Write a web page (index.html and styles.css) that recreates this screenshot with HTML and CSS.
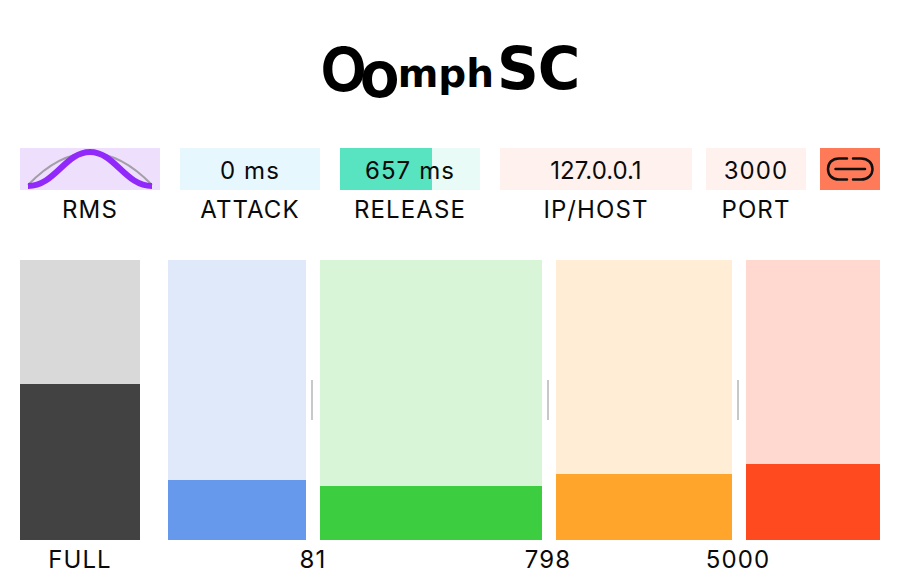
FILE: index.html
```html
<!DOCTYPE html>
<html lang="en">
<head>
  <meta charset="UTF-8">
  <title>OomphSC</title>
  <link rel="stylesheet" href="styles.css">
</head>
<body>
  <header class="logo">
    <span class="logo-big-o">O</span><span class="logo-small-o">o</span><span class="logo-mph">mph</span><span class="logo-sc">SC</span>
  </header>

  <section class="controls">
    <div class="control control-rms">
      <div class="box box-rms">
        <svg class="rms-curve" viewBox="0 0 140 42" width="140" height="42">
          <path class="curve-thin" d="M8 37 Q70 -27 132 37"/>
          <path class="curve-thick" d="M8 38 C35 38 45 4 70 4 C95 4 105 38 132 38"/>
        </svg>
      </div>
      <div class="label">RMS</div>
    </div>
    <div class="control control-attack">
      <div class="box box-attack">0 ms</div>
      <div class="label">ATTACK</div>
    </div>
    <div class="control control-release">
      <div class="box box-release">
        <div class="release-fill" style="width: 66%"></div>
        <span class="box-text">657 ms</span>
      </div>
      <div class="label">RELEASE</div>
    </div>
    <div class="control control-host">
      <div class="box box-net box-ip">127.0.0.1</div>
      <div class="label">IP/HOST</div>
    </div>
    <div class="control control-port">
      <div class="box box-net">3000</div>
      <div class="label">PORT</div>
    </div>
    <div class="control control-link">
      <button class="box box-link">
        <svg viewBox="0 0 60 42" width="60" height="42">
          <path class="link-icon" d="M27 10.500H19C12 10.500 8 15 8 21C8 27 12 31.500 19 31.500H27M33 10.500H41C48 10.500 52.500 15 52.500 21C52.500 27 48 31.500 41 31.500H33M15.500 21H45"/>
        </svg>
      </button>
    </div>
  </section>

  <section class="meters">
    <div class="full-col">
      <div class="bar bar-full"><div class="fill fill-full" style="height: 156px"></div></div>
      <div class="label">FULL</div>
    </div>
    <div class="bands">
      <div class="band-bars">
        <div class="bar bar-low"><div class="fill fill-low" style="height: 60px"></div></div>
        <div class="handle"></div>
        <div class="bar bar-mid"><div class="fill fill-mid" style="height: 54px"></div></div>
        <div class="handle"></div>
        <div class="bar bar-high"><div class="fill fill-high" style="height: 66px"></div></div>
        <div class="handle"></div>
        <div class="bar bar-top"><div class="fill fill-top" style="height: 76px"></div></div>
      </div>
      <div class="band-freqs">
        <span class="freq freq-low">81</span>
        <span class="freq freq-mid">798</span>
        <span class="freq freq-high">5000</span>
      </div>
    </div>
  </section>
</body>
</html>
```

FILE: styles.css
```css
/* Global */
*, *::before, *::after { box-sizing: border-box; }
html, body { height: 100%; }
body {
  margin: 0;
  padding: 0 20px;
  overflow: hidden;
  background: #fff;
  color: #0a0a0a;
  font-family: "Inter", "Liberation Sans", sans-serif;
  font-size: 24px;
  letter-spacing: 1.1px;
}

/* Logo */
.logo {
  display: flex;
  justify-content: center;
  align-items: flex-start;
  height: 148px;
  padding-top: 40px;
  color: #000;
  font-weight: 700;
  line-height: 1;
  letter-spacing: 0;
}
.logo-big-o { font-size: 60px; letter-spacing: -7px; margin-top: -1px; }
.logo-small-o { font-size: 65px; margin-top: 1px; letter-spacing: -2px; }
.logo-mph {
  font-family: "DejaVu Sans", sans-serif;
  font-size: 39px;
  margin-top: 14px;
}
.logo-sc {
  font-family: "DejaVu Sans", sans-serif;
  font-size: 58px;
  letter-spacing: -1px;
  margin-left: 3px;
}

/* Controls */
.controls { display: flex; height: 112px; }
.control { display: flex; flex-direction: column; align-items: stretch; }
.control-rms, .control-attack, .control-release { width: 140px; margin-right: 20px; }
.control-host { width: 192px; margin-right: 14px; }
.control-port { width: 100px; margin-right: 14px; }
.control-link { width: 60px; }
.box {
  display: flex;
  align-items: center;
  justify-content: center;
  position: relative;
  height: 42px;
  padding-top: 3px;
}
.box-rms { background: #eedffc; padding: 0; }
.box-attack { background: #e6f8fe; }
.box-release { background: #e9fbf7; }
.box-net { background: #fff1ee; }
.box-ip { letter-spacing: 0; }
.box-link { width: 60px; border: 0; padding: 0; background: #ff7a59; }
.release-fill {
  position: absolute;
  left: 0;
  top: 0;
  bottom: 0;
  background: #58e3c1;
}
.box-text { position: relative; }
.label { margin-top: 4px; text-align: center; line-height: 32px; }

.curve-thin { fill: none; stroke: #a39ea8; stroke-width: 2; }
.curve-thick { fill: none; stroke: #9229fb; stroke-width: 6; }
.link-icon { fill: none; stroke: #111; stroke-width: 2.5; stroke-linecap: round; }

/* Meters */
.meters { display: flex; gap: 28px; }
.full-col { width: 120px; }
.bands { flex: 1; }
.band-bars { display: flex; height: 280px; }
.bar {
  display: flex;
  flex-direction: column;
  justify-content: flex-end;
  height: 280px;
}
.bar-full { background: #d9d9d9; }
.bar-low { width: 138px; background: #e0e9fa; }
.bar-mid { width: 222px; background: #d9f5d8; }
.bar-high { width: 176px; background: #ffedd5; }
.bar-top { width: 134px; background: #ffd9d0; }
.fill-full { background: #424242; }
.fill-low { background: #6699eb; }
.fill-mid { background: #3dcd40; }
.fill-high { background: #ffa52b; }
.fill-top { background: #ff4a1f; }
.handle {
  width: 14px;
  padding-left: 5px;
  display: flex;
  align-items: center;
}
.handle::before {
  content: "";
  width: 2px;
  height: 40px;
  background: #c8c8c8;
}

.band-freqs { display: flex; margin-top: 4px; line-height: 32px; }
.freq { text-align: center; }
.freq-low { width: 290px; }
.freq-mid { width: 180px; margin-left: 0; }
.freq-high { width: 200px; }
```
